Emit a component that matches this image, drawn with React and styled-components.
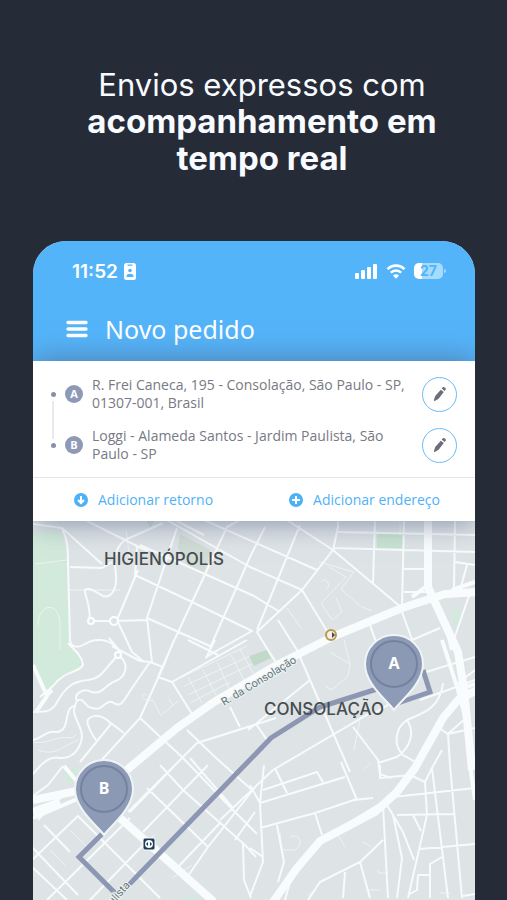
import React from "react";
import styled, { createGlobalStyle } from "styled-components";

const GlobalStyle = createGlobalStyle`
  * {
    box-sizing: border-box;
  }

  body {
    margin: 0;
    background-color: #262b38;
  }
`;

const Page = styled.main`
  min-height: 100vh;
  display: flex;
  flex-direction: column;
  padding: 66px 32px 0 33px;
  background-color: #262b38;
  font-family: "Open Sans", sans-serif;
`;

const Heading = styled.h1`
  margin: 0 0 64px;
  padding-left: 16px;
  color: #f8fbff;
  font-family: "Inter", sans-serif;
  font-size: 31px;
  line-height: 37px;
  font-weight: 400;
  text-align: center;

  strong {
    display: block;
    max-width: 370px;
    margin: 0 auto;
    font-size: 33px;
    font-weight: 700;
  }
`;

const Phone = styled.section`
  flex: 1;
  display: flex;
  flex-direction: column;
  overflow: hidden;
  border-radius: 33px 33px 0 0;
  background-color: #dee4e6;
`;

const Header = styled.header`
  height: 120px;
  padding: 18px 32px 0 39px;
  background-color: #54b4fa;
  color: white;
`;

const StatusBar = styled.div`
  display: flex;
  align-items: center;
  height: 24px;
  gap: 6px;
  font-family: "Inter", sans-serif;
  font-size: 19px;
  font-weight: 600;
`;

const StatusIcons = styled.div`
  display: flex;
  align-items: center;
  gap: 8px;
  margin-left: auto;
`;

const Battery = styled.div`
  position: relative;
  width: 29px;
  height: 16px;
  border-radius: 5px;
  background: linear-gradient(to right, white 8px, #a5dbfd 8px);
  color: #54b4fa;
  font-size: 14px;
  line-height: 16px;
  font-weight: 700;
  text-align: center;

  &::after {
    content: "";
    position: absolute;
    right: -3px;
    top: 6px;
    width: 2px;
    height: 4px;
    border-radius: 0 2px 2px 0;
    background-color: #a5dbfd;
  }
`;

const TitleBar = styled.div`
  display: flex;
  align-items: center;
  gap: 17px;
  height: 36px;
  margin: 28px 0 0 -6px;
`;

const MenuButton = styled.button`
  display: flex;
  padding: 0;
  border: none;
  background: none;
  color: white;
  cursor: pointer;
`;

const Title = styled.h2`
  margin: 0;
  font-family: "Noto Sans", sans-serif;
  font-size: 25px;
  line-height: 34px;
  font-weight: 400;
`;

const OrderCard = styled.div`
  position: relative;
  z-index: 1;
  background-color: white;
  box-shadow: 0 0 28px rgba(80, 95, 130, 0.7);
`;

const StopList = styled.ol`
  display: flex;
  flex-direction: column;
  gap: 15px;
  height: 116px;
  margin: 0;
  padding: 15px 18px 0;
  list-style: none;
`;

const Stop = styled.li`
  display: flex;
  align-items: center;
  height: 36px;
`;

const Dot = styled.span`
  position: relative;
  width: 5px;
  height: 5px;
  border-radius: 50%;
  background-color: #8590ab;

  &::after {
    content: "";
    display: ${(props) => (props.$linked ? "block" : "none")};
    position: absolute;
    top: 9px;
    left: 1px;
    width: 2px;
    height: 38px;
    background-color: #e9eaed;
  }
`;

const StopBadge = styled.span`
  flex: none;
  width: 18px;
  height: 18px;
  margin: 0 9px;
  border-radius: 50%;
  background-color: #8e99b5;
  color: white;
  font-size: 11px;
  line-height: 18px;
  font-weight: 700;
  text-align: center;
`;

const Address = styled.p`
  flex: 1;
  margin: 0;
  color: #777a83;
  font-size: 14px;
  line-height: 18px;
  font-weight: 500;
`;

const EditButton = styled.button`
  flex: none;
  display: flex;
  align-items: center;
  justify-content: center;
  width: 35px;
  height: 35px;
  margin-left: 10px;
  padding: 0;
  border: 1px solid #69bcf7;
  border-radius: 50%;
  background: none;
  cursor: pointer;
`;

const Actions = styled.div`
  display: flex;
  justify-content: space-between;
  height: 44px;
  padding: 0 35px 0 41px;
  border-top: 1px solid #e3e5e9;
`;

const ActionButton = styled.button`
  display: flex;
  align-items: center;
  gap: 10px;
  padding: 0;
  border: none;
  background: none;
  color: #50b2f6;
  font-family: "Open Sans", sans-serif;
  font-size: 14px;
  font-weight: 500;
  cursor: pointer;
`;

const MapArea = styled.div`
  flex: 1;
  display: flex;
  min-height: 379px;

  svg {
    flex: 1;
    width: 100%;
  }
`;

const stops = [
  { letter: "A", address: "R. Frei Caneca, 195 - Consolação, São Paulo - SP, 01307-001, Brasil" },
  { letter: "B", address: "Loggi - Alameda Santos - Jardim Paulista, São Paulo - SP" },
];

// Streets grouped by how wide they are drawn
const streets = [
  {
    width: 1,
    opacity: 0.6,
    d: `M180 678L247 646M184 686L250 656M188 695L252 664M190 703L230 682
      M188 677L202 703M203 670L216 695M217 662L230 690M231 655L244 680M240 649L253 673
      M319 562L354 572L341 589L360 606L372 611M329 567L346 577L321 603L332 620L342 612L336 598
      M321 582C326 576 332 585 326 590M38 625C38 603 60 600 60 625L60 650
      M147 695C138 690 142 704 153 700M153 700L160 714M160 716L178 701M169 699L173 705
      M33 742C50 745 55 735 72 738L76 735M38 750C55 756 60 748 78 740
      M330 652L350 664L348 676L332 690L325 686M350 664L344 640M360 720L354 750
      M280 833L282 850L295 850C304 845 300 832 290 837M338 835L345 847M363 842L372 847
      M378 870L379 873L388 873M368 890L380 890M440 893L450 893M308 895L316 890M364 769L371 763
      M35 564L67 560M70 590L120 590M126 530L130 560M172 878L192 865M70 830L90 850M50 850L65 865
      M287 608L301 628M400 535L400 520M140 845L155 835`,
  },
  {
    width: 2,
    opacity: 0.95,
    d: `M33 524L62 528L102 564M70 567L102 568L112 562M62 528C68 540 68 550 68 564L70 640C71 648 78 648 85 644C94 638 108 638 117 648
      M85 520L125 540L137 546L135 575L192 602L252 631L218 650L205 658
      M125 540L163 523M125 540C112 550 115 565 116 575C117 592 110 598 103 596C96 592 88 586 85 590C84 594 90 602 90 621L113 621L147 620
      M137 546L148 551M138 570L117 620L132 652L143 661M177 528L147 618L152 662M147 618L210 646
      M140 545L254 596L280 612M167 520L250 567L302 590M175 520L204 535M204 520L317 570M240 520L227 527L173 643L158 677
      M265 527L250 557L210 648M300 525L257 630M287 520L333 550L402 608M338 520L338 527L333 550L302 590L257 632L268 650L277 664
      M302 590L330 636M338 532L475 535M333 548L475 552M375 520L373 583M404 520L402 607M455 520L454 590
      M455 562L475 565M467 565L460 590M404 569L426 569M404 592L428 592M471 590L453 642
      M402 612L410 634L415 650M370 625L376 642M278 620L297 650L310 680L340 749L350 772M440 628L412 640
      M68 643C74 650 82 655 83 665C79 673 65 670 53 686L40 697
      M33 712C48 712 51 711 56 704C66 685 75 681 88 680C101 678 103 672 110 664C115 658 117 658 119 650L109 638
      M112 646L140 661L150 662L163 667L174 640M118 655C130 663 126 675 118 680C106 683 103 695 92 692C82 687 73 695 77 701C84 696 85 708 92 708C103 712 105 699 112 702C120 707 121 706 132 688L150 662
      M77 701C67 717 86 725 81 742C76 756 68 758 60 758C52 756 45 761 40 766L33 774M33 740C44 737 47 730 57 732C72 730 62 706 76 706
      M163 667L140 718L98 764M158 677L172 682L192 714M172 682L247 640M188 640L218 655M215 640L207 656
      M111 724C103 712 84 714 88 725C91 733 94 738 97 741M111 723L124 733M111 724L80 762M140 718L183 758L235 812L257 834M187 730L215 757L252 790
      M276 718L197 743L150 790L128 812M230 707L240 727M310 680L257 723L248 730M256 724L267 740
      M370 713L273 770L220 820M353 727L378 760L380 774L391 778M423 673L475 657M373 714L412 690
      M443 683C440 710 420 714 407 720C395 728 393 745 403 755L419 764M407 720C415 732 411 747 397 757L378 763M420 700L448 690L475 680
      M437 727L448 734L475 728M448 734L450 765M467 717L448 734M475 670L457 684
      M147 788L208 847M160 765L183 790L245 845L256 857M190 758L233 808M183 757L130 812M208 765L143 832
      M256 786L208 847L188 876M30 862L78 816L160 898M30 845L78 895M30 865L67 900M47 900L130 818M90 900L150 838
      M243 843L244 880L251 898M221 822L175 870M44 825L70 852M115 765L110 785M165 848L120 890M255 812L235 840
      M33 796L48 785L63 766M38 820L56 801L74 790
      M260 803L345 777M260 828L315 813L354 800L373 798M264 765L260 803L263 862L250 896M341 762L357 800
      M275 768L287 793M263 790L317 772L324 784M250 785L260 803M250 848L263 857M315 813L322 835M277 825L284 862L278 882
      M393 797L475 788M397 815L454 814M380 765L380 778L410 775L425 782L432 768L442 750M425 782L427 815L408 898
      M432 768L448 898M450 765L462 898M383 805L388 898M387 805L403 832L414 860M393 815L402 858L397 898M413 815L421 831
      M420 849L475 844M383 840L360 862L320 882L308 900M360 862L370 898M345 872L343 898
      M442 857L430 864L430 875L418 875L417 890L408 895M430 875L430 898M463 896L475 894M290 882L285 900`,
  },
  {
    width: 4,
    opacity: 1,
    d: `M33 665L47 696L36 712M47 695L52 690M322 840L385 802M33 818L75 800L92 792M64 766L84 790M470 765L475 800
      M431 592L446 625L452 650M412 597L428 585M442 640L458 690L466 720M475 582L452 590M458 690L475 684`,
  },
  {
    width: 8,
    opacity: 1,
    d: `M428 518L428 587L458 652L464 690L472 770M477 592L445 594L402 608L332 637L277 665L214 702L177 728L110 784L33 800M120 818L214 902M33 812L60 802
      M477 690L458 700L443 718L415 768L397 792L375 812L320 841L297 868L273 902`,
  },
];

const MenuIcon = () => (
  <svg width="22" height="18" viewBox="0 0 22 18" aria-hidden="true">
    <path d="M2 2.5h18M2 9h18M2 15.5h18" stroke="currentColor" strokeWidth="3.4" strokeLinecap="round" />
  </svg>
);

const IdIcon = () => (
  <svg width="12" height="17" viewBox="0 0 12 17" aria-hidden="true">
    <rect width="12" height="17" rx="2.5" fill="white" />
    <path d="M4 2.2h4" stroke="#54b4fa" strokeWidth="1.2" strokeLinecap="round" />
    <circle cx="6" cy="7.5" r="1.8" fill="#54b4fa" />
    <path d="M2.5 14v-1c0-3 7-3 7 0v1z" fill="#54b4fa" />
  </svg>
);

const SignalIcon = () => (
  <svg width="23" height="15" viewBox="0 0 23 15" fill="white" aria-hidden="true">
    <rect x="0" y="9" width="4" height="6" rx="1" />
    <rect x="6" y="6" width="4" height="9" rx="1" />
    <rect x="12" y="3" width="4" height="12" rx="1" />
    <rect x="18" y="0" width="4" height="15" rx="1" />
  </svg>
);

const WifiIcon = () => (
  <svg width="20" height="15" viewBox="0 0 20 15" fill="none" stroke="white" strokeWidth="2.6" aria-hidden="true">
    <path d="M1.5 5.2C6.2.4 13.8.4 18.5 5.2" />
    <path d="M4.8 8.7c2.9-2.9 7.5-2.9 10.4 0" />
    <path d="M7 11.6c1.7-1.7 4.3-1.7 6 0L10 14.8z" fill="white" stroke="none" />
  </svg>
);

const PencilIcon = () => (
  <svg width="14" height="16" viewBox="0 0 14 16" aria-hidden="true">
    <path d="M7.8 3.7L10.8 6 5.6 12.8 1.8 15c-.6.2-1-.1-.9-.7L2.2 9.9z" fill="#6c6f79" />
    <path d="M8.7 2.6l1-1.2c.5-.6 1-.6 1.6-.2l1.1.9c.6.5.6 1 .2 1.6l-1 1.2z" fill="#6c6f79" />
  </svg>
);

const RoundIcon = ({ children }) => (
  <svg width="14" height="14" viewBox="0 0 14 14" aria-hidden="true">
    <circle cx="7" cy="7" r="7" fill="#4db1f5" />
    <g fill="none" stroke="white" strokeWidth="2">
      {children}
    </g>
  </svg>
);

const Pin = ({ x, y, letter }) => (
  <g transform={`translate(${x} ${y})`}>
    <path
      d="M0 46C-5 38-29 21-29 0a29 29 0 0 1 58 0C29 21 5 38 0 46z"
      fill="#8e9bb7"
      stroke="#eef4f7"
      strokeWidth="2"
    />
    <circle r="23" fill="#8c99b5" stroke="#74829f" strokeWidth="2" />
    <text y="5" textAnchor="middle" fill="white" fontFamily="Noto Sans, sans-serif" fontSize="16" fontWeight="700">
      {letter}
    </text>
  </g>
);

const CityMap = () => (
  <svg viewBox="33 521 442 379" preserveAspectRatio="xMidYMin slice" role="img" aria-label="Mapa da rota">
    <rect x="33" y="521" width="442" height="379" fill="#dee4e6" />
    <g fill="#d2eadb">
      <path d="M33 532L58 530C65 540 67 550 67 564L69 648L82 656C85 666 78 670 68 674L53 687L46 690L33 660z" />
      <path d="M377 533H403V548H377z" fill="#c8e3d1" />
      <path d="M249 656L267 650L271 658L254 666z" fill="#c1d9c8" />
      <path d="M180 534L210 550L204 574L188 567L178 548z" fill="#d0dcd5" />
      <path d="M147 521L154 521L150 528z" fill="#c8dfd1" />
      <path d="M451 617L461 604L457 632z" />
      <path d="M64 772L78 765L76 782L68 784z" />
      <circle cx="192" cy="898" r="4" />
    </g>
    <g fill="none" stroke="#f9fcfd" strokeLinejoin="round">
      {streets.map((street) => (
        <path key={street.width} d={street.d} strokeWidth={street.width} opacity={street.opacity} />
      ))}
    </g>
    <g fill="#dee4e6" stroke="white" strokeWidth="2">
      <circle cx="91" cy="621" r="3" />
      <circle cx="114" cy="621" r="4" />
      <circle cx="118" cy="655" r="3" />
    </g>

    <path
      d="M423 670L430 692L398 703M396 683L320 707L271 738L118 896L79 857L102 834"
      fill="none"
      stroke="#8d97b3"
      strokeWidth="5"
    />

    <g fontFamily="Roboto, sans-serif" fontSize="11" fill="#65737a" stroke="#eef3f4" strokeWidth="2" paintOrder="stroke">
      <text transform="translate(224 706) rotate(-31)">R. da Consolação</text>
      <text transform="translate(104 915) rotate(-48)">Paulista</text>
    </g>
    <g fontFamily="Inter, sans-serif" fontSize="17" fontWeight="500" fill="#484d50" textAnchor="middle">
      <text x="164" y="565">HIGIENÓPOLIS</text>
      <text x="324" y="715">CONSOLAÇÃO</text>
    </g>

    <circle cx="331" cy="635" r="5" fill="#f6f1e4" stroke="#ba9853" strokeWidth="2" />
    <path d="M332 632v6l3-3z" fill="#3e4658" />
    <rect x="143" y="838" width="12" height="12" rx="2" fill="#1f3d59" stroke="#f5f8f9" />
    <circle cx="149" cy="844" r="4" fill="#f5f8f9" />
    <path d="M148 842l-2 2 2 2zM150 842l2 2-2 2z" fill="#1f3d59" />

    <Pin x={394} y={664} letter="A" />
    <Pin x={104} y={789} letter="B" />
  </svg>
);

function App() {
  return (
    <Page>
      <GlobalStyle />
      <Heading>
        Envios expressos com <strong>acompanhamento em tempo real</strong>
      </Heading>

      <Phone>
        <Header>
          <StatusBar>
            <span>11:52</span>
            <IdIcon />
            <StatusIcons>
              <SignalIcon />
              <WifiIcon />
              <Battery>27</Battery>
            </StatusIcons>
          </StatusBar>
          <TitleBar>
            <MenuButton type="button" aria-label="Menu">
              <MenuIcon />
            </MenuButton>
            <Title>Novo pedido</Title>
          </TitleBar>
        </Header>

        <OrderCard>
          <StopList>
            {stops.map((stop, index) => (
              <Stop key={stop.letter}>
                <Dot $linked={index < stops.length - 1} />
                <StopBadge>{stop.letter}</StopBadge>
                <Address>{stop.address}</Address>
                <EditButton type="button" aria-label={`Editar endereço ${stop.letter}`}>
                  <PencilIcon />
                </EditButton>
              </Stop>
            ))}
          </StopList>
          <Actions>
            <ActionButton type="button">
              <RoundIcon>
                <path d="M7 3v7M4 7l3 3 3-3" />
              </RoundIcon>
              Adicionar retorno
            </ActionButton>
            <ActionButton type="button">
              <RoundIcon>
                <path d="M7 3v8M3 7h8" />
              </RoundIcon>
              Adicionar endereço
            </ActionButton>
          </Actions>
        </OrderCard>

        <MapArea>
          <CityMap />
        </MapArea>
      </Phone>
    </Page>
  );
}

export default App;
